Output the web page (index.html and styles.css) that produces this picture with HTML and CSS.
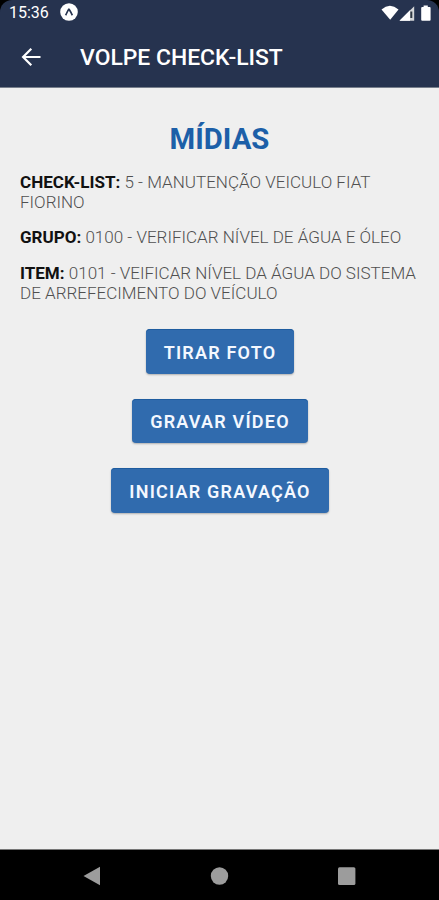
FILE: index.html
```html
<!DOCTYPE html>
<html lang="pt-BR">
<head>
<meta charset="utf-8">
<meta name="viewport" content="width=device-width, initial-scale=1">
<title>Volpe Check-List</title>
<link rel="stylesheet" href="styles.css">
</head>
<body>
<div class="screen">
  <header class="header">
    <div class="status">
      <span class="time">15:36</span>
      <svg class="expo" viewBox="0 0 18 18"><circle cx="9" cy="9" r="8.800" fill="#fff"/><path d="M5.600 12.300C7 10 7.800 7 8.900 6.200C10 7 11 10 12.400 12.300" fill="none" stroke="#26334f" stroke-width="1.700"/></svg>
      <svg class="signals" viewBox="0 0 52 18">
        <path d="M.5 5.400Q8.900-2 17.500 5.400L9.200 15.800Z" fill="#fff"/>
        <path d="M18.500 16.800L33.200 2.200V16.800Z" fill="#d5d7d8"/>
        <path d="M18.500 16.800L29 6.300V16.800Z" fill="#fff"/>
        <path d="M29.300 7.500h2v6.500h-2z" fill="#303943"/>
        <path d="M42.600 1.600h4.200v1.400h1.800q1 0 1 1V15.800q0 1-1 1h-7.400q-1 0-1-1V4q0-1 1-1h1.400z" fill="#fff"/>
      </svg>
    </div>
    <div class="toolbar">
      <svg class="back" viewBox="0 0 20 20"><path d="M19.500 10H2.300M10.300 1.800L2.100 10L10.300 18.200" fill="none" stroke="#fff" stroke-width="2.200"/></svg>
      <h1 class="title">VOLPE CHECK-LIST</h1>
    </div>
  </header>
  <main class="content">
    <h2 class="heading">MÍDIAS</h2>
    <p class="info"><b>CHECK-LIST:</b> 5 - MANUTENÇÃO VEICULO FIAT<br>FIORINO</p>
    <p class="info"><b>GRUPO:</b> 0100 - VERIFICAR NÍVEL DE ÁGUA E ÓLEO</p>
    <p class="info"><b>ITEM:</b> 0101 - VEIFICAR NÍVEL DA ÁGUA DO SISTEMA<br>DE ARREFECIMENTO DO VEÍCULO</p>
    <div class="actions">
      <button class="button photo">TIRAR FOTO</button>
      <button class="button video">GRAVAR VÍDEO</button>
      <button class="button record">INICIAR GRAVAÇÃO</button>
    </div>
  </main>
  <nav class="nav">
    <svg viewBox="0 0 20 20"><path d="M1.500 10L18 .800V19.200Z"/></svg>
    <svg viewBox="0 0 20 20"><circle cx="10.500" cy="10" r="8.700"/></svg>
    <svg viewBox="0 0 20 20"><rect x="2" y="1.200" width="17.400" height="17.800" rx="1.500"/></svg>
  </nav>
</div>
</body>
</html>
```
FILE: styles.css
```css
* { box-sizing: border-box; }
body { margin: 0; background: #000; font-family: Roboto, sans-serif; }
.screen { display: flex; flex-direction: column; width: 439px; height: 900px; overflow: hidden; border-radius: 12px 12px 0 0; }
.header { height: 88px; flex: none; background: #26334f; border-bottom: 1px solid #777f8c; color: #fff; }
.status { display: flex; align-items: center; height: 24px; padding: 0 6px 0 9px; }
.time { width: 51px; padding-top: 1px; font-size: 16px; line-height: 24px; }
.expo { width: 18px; height: 18px; }
.signals { width: 52px; height: 18px; margin: 2px 0 0 auto; }
.toolbar { display: flex; align-items: center; height: 64px; padding: 3px 0 0 21px; }
.back { width: 20px; height: 20px; margin-top: -2px; }
.title { margin: 0 0 0 39px; font-size: 22.900px; line-height: 28px; font-weight: 500; white-space: nowrap; }
.content { flex: 1; background: #efefef; padding: 33px 20px 0; }
.heading { margin: 0 0 16px; text-align: center; font-size: 29.300px; line-height: 36px; font-weight: 700; color: #1c5fa8; }
.info { margin: 0 0 16px; font-size: 17.050px; line-height: 19.700px; font-weight: 300; color: #505050; white-space: nowrap; }
.info b { font-weight: 700; color: #111; }
.actions { display: flex; flex-direction: column; align-items: center; gap: 25px; margin-top: 25.500px; }
.button { height: 44.500px; padding: 3px 0 0 1px; border: 0; border-radius: 4px; background: #306bae; color: #f4f8ff; font: 600 18px/24px Roboto, sans-serif; letter-spacing: 1.200px; text-align: center; box-shadow: inset 0 1px 0 #1e5c9f, 0 1px 2px #0004; white-space: nowrap; }
.photo { width: 148px; }
.video { width: 176px; }
.record { width: 218px; }
.nav { display: flex; justify-content: space-between; align-items: center; flex: none; height: 51px; padding: 2px 83px 0 82px; border-top: 1px solid #777; background: #000; }
.nav svg { width: 20px; height: 20px; fill: #9c9c9c; }
```
